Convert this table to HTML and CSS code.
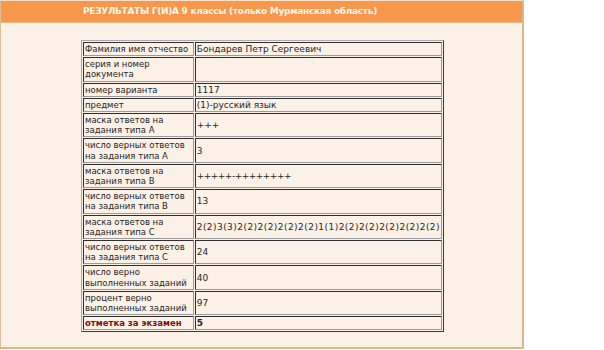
FILE: index.html
```html
<!DOCTYPE html>
<html lang="ru">
<head>
<meta charset="utf-8">
<link rel="stylesheet" href="styles.css">
</head>
<body>
<div class="panel">
  <div class="head">РЕЗУЛЬТАТЫ Г(И)А 9 классы (только Мурманская область)</div>
  <div class="content">
    <table class="res">
      <tr><td class="k">Фамилия имя отчество</td><td class="v">Бондарев Петр Сергеевич</td></tr>
      <tr><td class="k">серия и номер документа</td><td class="v"></td></tr>
      <tr><td class="k">номер варианта</td><td class="v">1117</td></tr>
      <tr><td class="k">предмет</td><td class="v">(1)-русский язык</td></tr>
      <tr><td class="k">маска ответов на задания типа А</td><td class="v">+++</td></tr>
      <tr><td class="k">число верных ответов на задания типа А</td><td class="v">3</td></tr>
      <tr><td class="k">маска ответов на задания типа В</td><td class="v plus">+++++-++++++++</td></tr>
      <tr><td class="k">число верных ответов на задания типа В</td><td class="v">13</td></tr>
      <tr><td class="k">маска ответов на задания типа С</td><td class="v wide">2(2)3(3)2(2)2(2)2(2)2(2)1(1)2(2)2(2)2(2)2(2)2(2)</td></tr>
      <tr><td class="k">число верных ответов на задания типа С</td><td class="v">24</td></tr>
      <tr><td class="k">число верно выполненных заданий</td><td class="v">40</td></tr>
      <tr><td class="k">процент верно выполненных заданий</td><td class="v">97</td></tr>
      <tr class="mark"><td class="k">отметка за экзамен</td><td class="v">5</td></tr>
    </table>
  </div>
</div>
</body>
</html>
```
FILE: styles.css
```css
html, body {
  margin: 0;
  padding: 0;
  background: #ffffff;
}
.panel {
  width: 521px;
  background: #fcf1e7;
  border-left: 1px solid #ddc09a;
  border-right: 2px solid #d9b98c;
  border-bottom: 2px solid #d9b98c;
  border-top: 1px solid #fbe2cc;
}
.head {
  height: 21px;
  line-height: 21px;
  background: #f7974c;
  color: #fff4ea;
  font-family: "DejaVu Sans", Verdana, sans-serif;
  font-weight: bold;
  font-size: 9px;
  letter-spacing: -0.3px;
  padding-left: 82px;
  border-bottom: 1px solid #f2b385;
}
.content {
  padding: 17px 0 15px 80px;
}
.res {
  width: 363px;
  border-collapse: separate;
  border-spacing: 1px;
  border-top: 1px solid #a9a9a9;
  border-left: 1px solid #a9a9a9;
  border-right: 1px solid #3a3a3a;
  border-bottom: 1px solid #3a3a3a;
  font-family: "DejaVu Sans", Verdana, sans-serif;
  color: #262626;
}
.res td {
  border-top: 1px solid #2e2e2e;
  border-left: 1px solid #2e2e2e;
  border-right: 1px solid #9a9a9a;
  border-bottom: 1px solid #9a9a9a;
  padding: 1px 1px;
  line-height: 10.2px;
  vertical-align: middle;
  background: #fcf1e7;
}
.res td.k {
  width: 108px;
  font-size: 8.5px;
}
.res td.v {
  font-size: 9px;
  white-space: nowrap;
}
.res td.plus {
  letter-spacing: -0.5px;
}
.res td.wide {
  letter-spacing: 0.45px;
}
.mark td {
  font-weight: bold;
}
.mark td.k {
  color: #7a1010;
}
```
